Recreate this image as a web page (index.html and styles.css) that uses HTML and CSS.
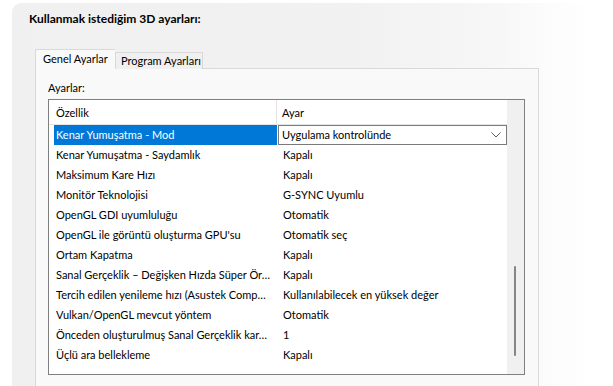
FILE: index.html
```html
<!DOCTYPE html>
<html lang="tr">
<head>
    <meta charset="UTF-8">
    <title>3D Ayarlarını Yönet</title>
    <link rel="stylesheet" href="styles.css">
</head>
<body>
    <div class="window">
        <h1 class="title">Kullanmak istediğim 3D ayarları:</h1>

        <div class="tabs">
            <div class="tab active">Genel Ayarlar</div>
            <div class="tab">Program Ayarları</div>
        </div>

        <div class="tab-panel">
            <div class="label">Ayarlar:</div>

            <div class="listbox">
                <div class="list-main">
                    <div class="list-header">
                        <div class="col-name">Özellik</div>
                        <div class="col-value">Ayar</div>
                    </div>

                    <div class="row selected">
                        <div class="col-name">Kenar Yumuşatma - Mod</div>
                        <div class="col-value">
                            <div class="combo">
                                <span>Uygulama kontrolünde</span>
                                <svg class="chevron" width="10" height="6" viewBox="0 0 10 6">
                                    <path d="M0.5 0.5 L5 5 L9.5 0.5" fill="none" stroke="#606060" stroke-width="1"/>
                                </svg>
                            </div>
                        </div>
                    </div>
                    <div class="row">
                        <div class="col-name">Kenar Yumuşatma - Saydamlık</div>
                        <div class="col-value">Kapalı</div>
                    </div>
                    <div class="row">
                        <div class="col-name">Maksimum Kare Hızı</div>
                        <div class="col-value">Kapalı</div>
                    </div>
                    <div class="row">
                        <div class="col-name">Monitör Teknolojisi</div>
                        <div class="col-value">G-SYNC Uyumlu</div>
                    </div>
                    <div class="row">
                        <div class="col-name">OpenGL GDI uyumluluğu</div>
                        <div class="col-value">Otomatik</div>
                    </div>
                    <div class="row">
                        <div class="col-name">OpenGL ile görüntü oluşturma GPU'su</div>
                        <div class="col-value">Otomatik seç</div>
                    </div>
                    <div class="row">
                        <div class="col-name">Ortam Kapatma</div>
                        <div class="col-value">Kapalı</div>
                    </div>
                    <div class="row">
                        <div class="col-name">Sanal Gerçeklik – Değişken Hızda Süper Ör…</div>
                        <div class="col-value">Kapalı</div>
                    </div>
                    <div class="row">
                        <div class="col-name">Tercih edilen yenileme hızı (Asustek Comp…</div>
                        <div class="col-value">Kullanılabilecek en yüksek değer</div>
                    </div>
                    <div class="row">
                        <div class="col-name">Vulkan/OpenGL mevcut yöntem</div>
                        <div class="col-value">Otomatik</div>
                    </div>
                    <div class="row">
                        <div class="col-name">Önceden oluşturulmuş Sanal Gerçeklik kar…</div>
                        <div class="col-value">1</div>
                    </div>
                    <div class="row">
                        <div class="col-name">Üçlü ara bellekleme</div>
                        <div class="col-value">Kapalı</div>
                    </div>
                </div>

                <div class="scrollbar">
                    <div class="thumb"></div>
                </div>
            </div>
        </div>
    </div>
</body>
</html>
```

FILE: styles.css
```css
* {
    box-sizing: border-box;
}

body {
    margin: 0;
    background: #fff;
    font-family: 'Lato', 'Open Sans', sans-serif;
    font-size: 11px;
    color: #000;
    overflow: hidden;
}

.window {
    margin: 3px 0 0 12px;
    height: 383px;
    padding: 8px 0 0 17px;
    border-radius: 9px 0 0 0;
    background: linear-gradient(to right, #f0f0f0 0, #f1f1f1 330px, #f6f6f6 470px, #fcfcfc 540px, #fff 580px);
    overflow: hidden;
}

.title {
    margin: 0;
    font-size: 12px;
    font-weight: bold;
    line-height: 16px;
}

.tabs {
    display: flex;
    align-items: flex-end;
    margin: 22px 0 0 6px;
    height: 20px;
    position: relative;
    z-index: 1;
}

.tab {
    width: 88px;
    height: 17px;
    padding: 0 5px;
    line-height: 16px;
    border: 1px solid #d9d9d9;
    border-bottom: none;
    background: #f0f0f0;
    white-space: nowrap;
}

.tab.active {
    width: 80px;
    height: 20px;
    padding: 0 7px;
    line-height: 18px;
    background: #f9f9f9;
    border-right: none;
}

.tab-panel {
    margin: -1px 0 0 6px;
    width: 504px;
    height: 340px;
    padding: 0 0 0 12px;
    border: 1px solid #d9d9d9;
    background: #f9f9f9;
}

.label {
    height: 30px;
    line-height: 16px;
    padding-top: 11px;
}

.listbox {
    display: flex;
    width: 477px;
    height: 276px;
    border: 1px solid #7f7f7f;
    background: #fff;
}

.list-main {
    flex: 1;
}

.list-header {
    display: flex;
    height: 25px;
    line-height: 25px;
    border-bottom: 1px solid #e5e5e5;
}

.list-header .col-name {
    width: 228px;
    padding-left: 7px;
    border-right: 1px solid #e5e5e5;
}

.list-header .col-value {
    padding-left: 5px;
}

.row {
    display: flex;
    height: 20px;
    line-height: 20px;
    white-space: nowrap;
}

.row .col-name {
    width: 223px;
    margin-left: 5px;
    padding-left: 2px;
    overflow: hidden;
}

.row .col-value {
    flex: 1;
    padding-left: 6px;
}

.row.selected .col-name {
    background: #0078d7;
    color: #fff;
}

.row.selected .col-value {
    padding-left: 1px;
}

.combo {
    display: flex;
    align-items: center;
    justify-content: space-between;
    height: 20px;
    padding: 0 5px 0 3px;
    line-height: 18px;
    border: 1px solid #7a7a7a;
    background: #fff;
}

.chevron {
    display: block;
}

.scrollbar {
    width: 17px;
    background: #f0f0f0;
    padding-top: 166px;
}

.thumb {
    width: 2px;
    height: 90px;
    margin-left: 7px;
    border-radius: 1px;
    background: #858585;
}
```
